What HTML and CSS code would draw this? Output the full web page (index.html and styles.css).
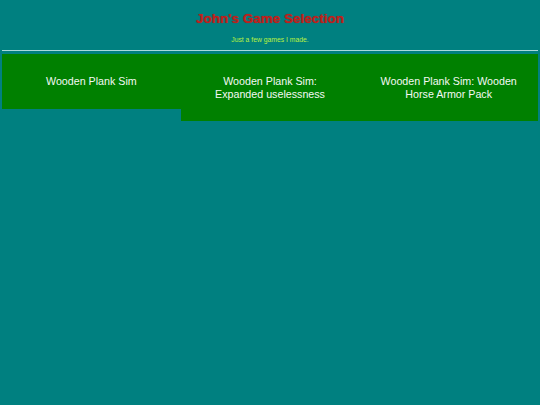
FILE: index.html
```html
<!DOCTYPE html>
<html>
<head>
<meta charset="utf-8">
<link rel="stylesheet" href="styles.css">
</head>
<body>
<header class="header">
  <h1 class="title">John's Game Selection</h1>
  <p class="subtitle">Just a few games I made.</p>
</header>
<hr class="rule">
<main class="games">
  <div class="game">Wooden Plank Sim</div>
  <div class="game">Wooden Plank Sim: Expanded uselessness</div>
  <div class="game">Wooden Plank Sim: Wooden Horse Armor Pack</div>
</main>
</body>
</html>
```
FILE: styles.css
```css
html, body {
  margin: 0;
  padding: 0;
  background: #008080;
  font-family: "Liberation Sans", Arial, sans-serif;
}
body {
  padding: 0 2px;
}
.header {
  text-align: center;
  padding-top: 11px;
}
.title {
  margin: 0;
  font-size: 13.5px;
  line-height: 16px;
  font-weight: bold;
  color: #c0201c;
  text-shadow: 0 0 1px #a02020;
}
.subtitle {
  margin: 9px 0 0;
  font-size: 6.8px;
  line-height: 8px;
  color: #b8f040;
}
.rule {
  margin: 6px 0 0;
  border: 0;
  height: 1px;
  background: #a8dada;
}
.games {
  display: flex;
  align-items: flex-start;
  margin-top: 3px;
}
.game {
  flex: 1;
  background: #008000;
  color: #f4f8f4;
  font-size: 10.7px;
  line-height: 12.5px;
  text-align: center;
  padding: 21px 20px;
}
```
